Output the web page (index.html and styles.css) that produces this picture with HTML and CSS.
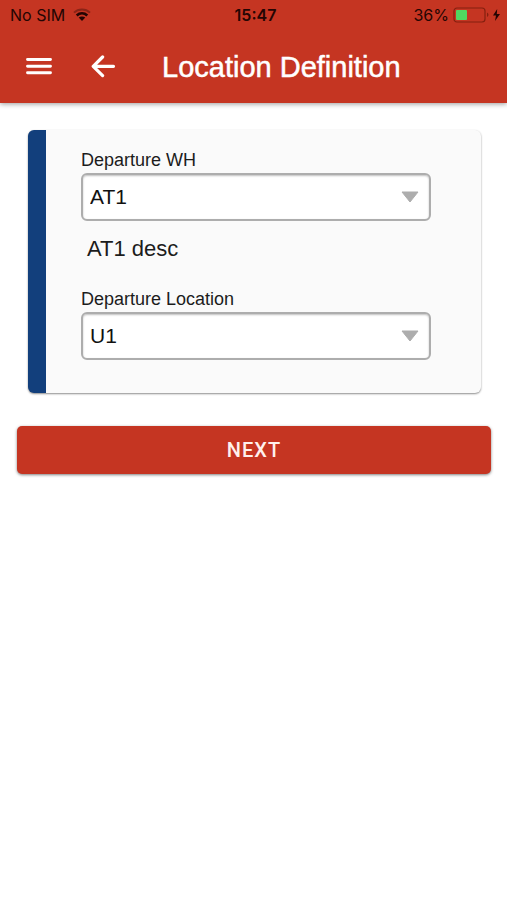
FILE: index.html
```html
<!DOCTYPE html>
<html lang="en">
<head>
<meta charset="utf-8">
<meta name="viewport" content="width=device-width, initial-scale=1">
<title>Location Definition</title>
<link rel="stylesheet" href="styles.css">
</head>
<body>
<header class="header">
  <div class="status">
    <div class="status-side">
      <span>No SIM</span>
      <svg width="18" height="14" viewBox="0 0 18 14" fill="none" aria-hidden="true">
        <path d="M1 4.6C5.4.4 12.6.4 17 4.6" stroke="#8a2417" stroke-width="2"/>
        <path d="M3.7 7.5C6.8 4.7 11.2 4.7 14.3 7.5" stroke="#240503" stroke-width="2.6"/>
        <path d="M5.7 9.6C7.6 8 10.4 8 12.3 9.6L9 13Z" fill="#240503"/>
      </svg>
    </div>
    <span class="clock">15:47</span>
    <div class="status-side status-right">
      <span>36%</span>
      <svg width="48" height="16" viewBox="0 0 48 16" aria-hidden="true">
        <rect x="1" y="1" width="31" height="14" rx="3" fill="none" stroke="#84200f" stroke-width="1.2"/>
        <rect x="3" y="3" width="11" height="10" rx="1" fill="#50d860"/>
        <path d="M34 5.5C36 6.5 36 9 34 10Z" fill="#84200f"/>
        <path d="M44.2 2L40 8.6H43L42 14L47 6.9H43.8Z" fill="#240503"/>
      </svg>
    </div>
  </div>
  <div class="toolbar">
    <button class="icon-button" type="button" aria-label="Menu">
      <svg width="26" height="24" viewBox="0 0 26 24" aria-hidden="true">
        <path d="M1.5 4.5H24.5M1.5 11.2H24.5M1.5 17.8H24.5" stroke="#fff" stroke-width="2.9" stroke-linecap="round"/>
      </svg>
    </button>
    <button class="icon-button" type="button" aria-label="Back">
      <svg width="26" height="24" viewBox="0 0 26 24" fill="none" stroke="#fff" stroke-width="3.2" stroke-linecap="round" stroke-linejoin="round" aria-hidden="true">
        <path d="M23.5 11.3H4M12.6 2L3.2 11.3L12.6 20.6"/>
      </svg>
    </button>
    <h1 class="title">Location Definition</h1>
  </div>
</header>
<main class="content">
  <form class="form">
    <section class="card">
      <label class="label" for="warehouse">Departure WH</label>
      <select class="select" id="warehouse"><option>AT1</option></select>
      <p class="description">AT1 desc</p>
      <label class="label" for="location">Departure Location</label>
      <select class="select" id="location"><option>U1</option></select>
    </section>
    <button class="next" type="button">NEXT</button>
  </form>
</main>
</body>
</html>
```
FILE: styles.css
```css
* {
  box-sizing: border-box;
}

body {
  margin: 0;
  background: #fff;
  color: #1c1c1c;
  font-family: "Liberation Sans", Arial, sans-serif;
}

.header {
  background: #c53522;
  box-shadow: 0 1px 5px rgba(0, 0, 0, 0.4);
}

.status {
  display: flex;
  align-items: center;
  height: 30px;
  padding: 0 6px 0 10px;
  color: #240503;
  font: 16px/20px Inter, sans-serif;
}

.status-side {
  display: flex;
  flex: 1;
  align-items: center;
  gap: 8px;
}

.status-right {
  justify-content: flex-end;
  gap: 4px;
}

.clock {
  font-weight: 600;
}

.toolbar {
  display: flex;
  align-items: center;
  height: 73px;
  padding: 0 26px;
}

.icon-button {
  display: flex;
  margin-right: 38px;
  padding: 0;
  border: 0;
  background: none;
}

.title {
  margin: 0 0 0 8px;
  color: #fff;
  font-size: 29px;
  font-weight: 400;
  line-height: 32px;
  -webkit-text-stroke: 0.5px #fff;
}

.content {
  padding: 27px 16px 16px 17px;
}

.card {
  margin: 0 10px 33px 11px;
  padding: 20px 50px 33px 35px;
  border-left: 18px solid #123f7c;
  border-radius: 6px;
  background: #fafafa;
  box-shadow: 0 1px 2px rgba(0, 0, 0, 0.45);
}

.label {
  display: block;
  padding-bottom: 3px;
  font-size: 18px;
  line-height: 20px;
}

.select {
  display: block;
  width: 100%;
  height: 48px;
  padding: 0 7px;
  border: 2px solid #adadad;
  border-radius: 6px;
  appearance: none;
  background: #fff url("data:image/svg+xml,%3Csvg xmlns='http://www.w3.org/2000/svg' width='18' height='12'%3E%3Cpath d='M1 1H17L9 11Z' fill='%23adadad' stroke='%23adadad' stroke-linejoin='round'/%3E%3C/svg%3E") no-repeat right 10px center;
  box-shadow: inset 0 1px 2px rgba(0, 0, 0, 0.25);
  color: #111;
  font: 21px/26px "Liberation Sans", Arial, sans-serif;
}

.description {
  margin: 0;
  padding: 14px 6px 27px;
  font-size: 22px;
  line-height: 27px;
}

.next {
  display: block;
  width: 100%;
  height: 48px;
  border: 0;
  border-radius: 5px;
  background: #c53522;
  box-shadow: 0 1px 3px rgba(0, 0, 0, 0.5);
  color: #fff0ed;
  font: 500 20px/24px Roboto, sans-serif;
  letter-spacing: 1px;
}
```
